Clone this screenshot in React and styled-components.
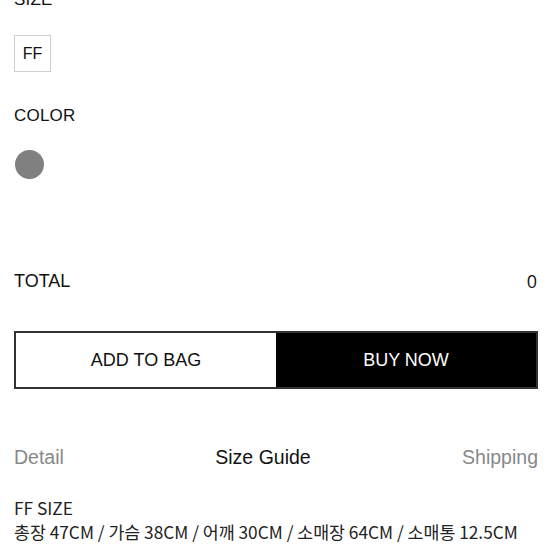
import React from 'react';
import styled, { createGlobalStyle } from 'styled-components';

const GlobalStyle = createGlobalStyle`
  body {
    margin: 0;
    background: #fff;
    font-family: "Liberation Sans", Arial, sans-serif;
    color: #111;
  }
`;

const Page = styled.div`
  width: 552px;
  height: 552px;
  overflow: hidden;
  padding: 0 14px;
  box-sizing: border-box;
`;

const Inner = styled.div`
  margin-top: -10px;
`;

const Label = styled.div`
  font-size: 17px;
  line-height: 20px;
  letter-spacing: 0.2px;
`;

const SizeBox = styled.div`
  width: 37px;
  height: 37px;
  box-sizing: border-box;
  border: 1px solid #cfcfcf;
  display: flex;
  align-items: center;
  justify-content: center;
  font-size: 16px;
  margin: 25px 0 34px;
`;

const Swatch = styled.div`
  width: 29px;
  height: 29px;
  border-radius: 50%;
  background: ${p => p.color};
  margin: 24px 0 0 1px;
`;

const TotalRow = styled.div`
  display: flex;
  justify-content: space-between;
  align-items: center;
  margin-top: 91px;
  font-size: 18px;
  line-height: 22px;
`;

const Amount = styled.span`
  font-family: "Open Sans", sans-serif;
  font-size: 18px;
  margin-right: 1px;
`;

const Buttons = styled.div`
  display: flex;
  margin-top: 39px;
  border: 2px solid #333;
  height: 58px;
  box-sizing: border-box;
`;

const Button = styled.div`
  flex: 1;
  display: flex;
  align-items: center;
  justify-content: center;
  font-size: 18px;
  background: ${p => (p.dark ? '#000' : '#fff')};
  color: ${p => (p.dark ? '#fff' : '#111')};
`;

const Tabs = styled.div`
  display: flex;
  justify-content: space-between;
  margin-top: 57px;
  font-size: 19.5px;
  line-height: 22px;
`;

const Tab = styled.span`
  color: ${p => (p.active ? '#111' : '#888')};
`;

const Guide = styled.div`
  margin-top: 28px;
  font-family: "Noto Sans CJK KR", "Noto Sans", sans-serif;
  font-size: 17.3px;
  line-height: 24px;
  color: #222;
`;

export default function App() {
  return (
    <Page>
      <GlobalStyle />
      <Inner>
        <Label>SIZE</Label>
        <SizeBox>FF</SizeBox>
        <Label>COLOR</Label>
        <Swatch color="#808080" />
        <TotalRow>
          <span>TOTAL</span>
          <Amount>0</Amount>
        </TotalRow>
        <Buttons>
          <Button>ADD TO BAG</Button>
          <Button dark>BUY NOW</Button>
        </Buttons>
        <Tabs>
          <Tab>Detail</Tab>
          <Tab active>Size Guide</Tab>
          <Tab>Shipping</Tab>
        </Tabs>
        <Guide>
          <div>FF SIZE</div>
          <div>총장 47CM / 가슴 38CM / 어깨 30CM / 소매장 64CM / 소매통 12.5CM</div>
        </Guide>
      </Inner>
    </Page>
  );
}
